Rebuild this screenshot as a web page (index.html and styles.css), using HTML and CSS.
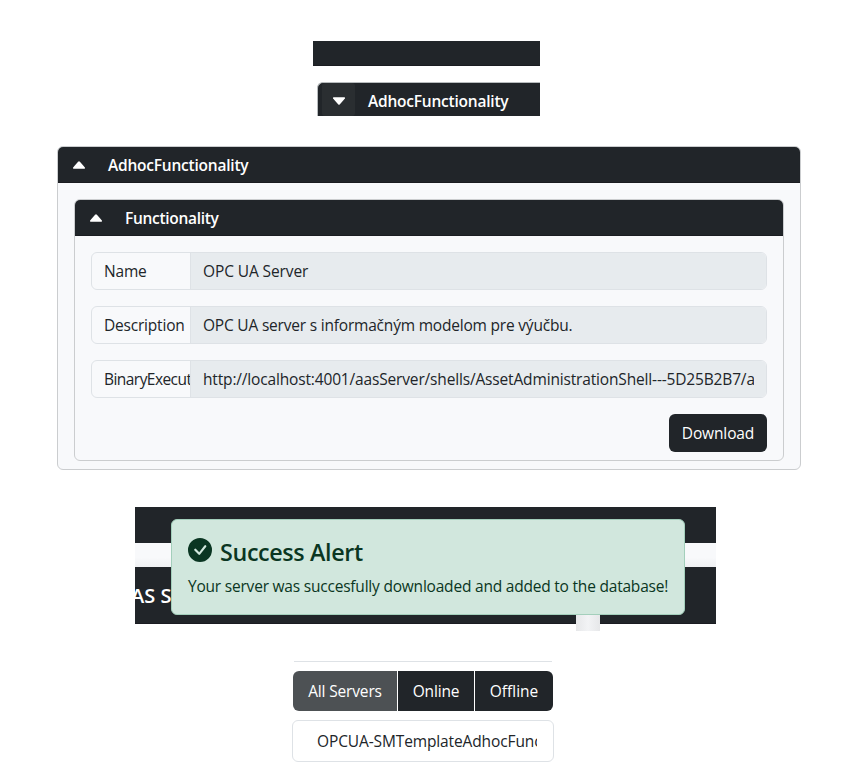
FILE: index.html
```html
<!DOCTYPE html>
<html lang="en">
<head>
<meta charset="utf-8">
<title>AAS Servers</title>
<link rel="stylesheet" href="styles.css">
</head>
<body>
<main class="page">
  <div class="bar"></div>

  <section class="collapsed">
    <button class="toggle" aria-label="Expand"><svg width="14" height="8" viewBox="0 0 14 8"><path d="M1.700.3h10.600c.7 0 1 .7.6 1.200L7.900 7.200a1.200 1.200 0 0 1-1.800 0L1.100 1.500C.700 1 1 .3 1.700.3z"/></svg></button>
    <span class="heading"><span class="t-adhoc">AdhocFunctionality</span></span>
  </section>

  <section class="card outer">
    <header class="card-head">
      <svg width="14" height="8" viewBox="0 0 14 8"><path d="M1.700 7.700h10.600c.7 0 1-.7.6-1.200L7.900.8a1.200 1.200 0 0 0-1.800 0L1.100 6.500c-.4.5-.1 1.200.6 1.200z"/></svg>
      <span class="t-adhoc">AdhocFunctionality</span>
    </header>
    <div class="card inner">
      <header class="card-head">
        <svg width="14" height="8" viewBox="0 0 14 8"><path d="M1.700 7.700h10.600c.7 0 1-.7.6-1.200L7.900.8a1.200 1.200 0 0 0-1.800 0L1.100 6.500c-.4.5-.1 1.200.6 1.200z"/></svg>
        <span class="t-func">Functionality</span>
      </header>
      <div class="fields">
        <div class="field"><div class="label"><span class="t-name">Name</span></div><div class="value"><div class="clip"><span class="t-server">OPC UA Server</span></div></div></div>
        <div class="field"><div class="label"><span class="t-desc">Description</span></div><div class="value"><div class="clip"><span class="t-text">OPC UA server s informačným modelom pre výučbu.</span></div></div></div>
        <div class="field"><div class="label"><span class="t-bin">BinaryExecut</span></div><div class="value"><div class="clip"><span class="t-url">http://localhost:4001/aasServer/shells/AssetAdministrationShell---5D25B2B7/a</span></div></div></div>
        <button class="download"><span class="t-down">Download</span></button>
      </div>
    </div>
  </section>

  <section class="notice">
    <div class="strip top"></div>
    <div class="strip light"></div>
    <div class="strip title"><span class="t-as">AS S</span></div>
    <div class="stub"></div>
    <div class="alert">
      <div class="alert-head">
        <svg width="24" height="24" viewBox="0 0 16 16"><path d="M16 8A8 8 0 1 1 0 8a8 8 0 0 1 16 0zm-3.970-3.030a.75.75 0 0 0-1.080.022L7.477 9.417 5.384 7.323a.75.75 0 0 0-1.060 1.060L6.970 11.030a.75.75 0 0 0 1.079-.02l3.992-4.990a.75.75 0 0 0-.010-1.050z"/></svg>
        <span class="t-success">Success Alert</span>
      </div>
      <div class="alert-body"><span class="t-body">Your server was succesfully downloaded and added to the database!</span></div>
    </div>
  </section>

  <section class="filter">
    <div class="rule"></div>
    <div class="group">
      <button class="tab all"><span class="t-all">All Servers</span></button>
      <button class="tab online"><span class="t-on">Online</span></button>
      <button class="tab offline"><span class="t-off">Offline</span></button>
    </div>
    <div class="item"><div class="clip"><span class="t-item">OPCUA-SMTemplateAdhocFunc</span></div></div>
  </section>
</main>
</body>
</html>
```
FILE: styles.css
```css
* { box-sizing: border-box; }
body { margin: 0; background: #fff; color: #212529; font: 15.5px/24px "Open Sans", "Noto Sans", sans-serif; }
button { font: inherit; border: 0; padding: 0; color: #fff; }
svg { display: block; fill: currentColor; flex: none; }
.page { display: flex; flex-direction: column; height: 773px; padding-top: 41px; overflow: hidden; }
.bar { width: 227px; height: 25px; margin-left: 313px; background: #212529; border-bottom: 1px solid #1a1c21; }
.collapsed { display: flex; width: 223px; height: 34px; margin: 16px 0 0 317px; background: #212529; border: solid #b8bcbe; border-width: 1px 0 0 1px; border-radius: 6px 0 0 0; color: #fff; overflow: hidden; }
.toggle { width: 33px; margin-left: 4px; padding-top: 2px; background: #2a2e31; display: flex; justify-content: center; align-items: center; border-radius: 3px; }
.heading { margin-left: 13px; padding-top: 6px; font-weight: 600; }
.card { border: 1px solid #cbcdcf; border-radius: 6px; background: #f8f9fb; overflow: hidden; }
.card-head { display: flex; align-items: center; height: 36px; padding: 1px 0 0 14px; gap: 22px; background: #212529; border-bottom: 1px solid #1a1c21; color: #fff; font-weight: 600; }
.outer { width: 744px; height: 324px; margin: 30px 0 0 57px; }
.inner { width: 710px; height: 262px; margin: 16px 0 0 16px; }
.fields { display: flex; flex-direction: column; gap: 16px; padding: 16px; }
.field { display: flex; height: 38px; border: 1px solid #dee2e6; border-radius: 6px; overflow: hidden; }
.label { width: 98px; padding: 6px 0 0 12px; overflow: hidden; white-space: nowrap; flex: none; }
.value { flex: 1; min-width: 0; padding: 6px 12px; background: #e7ebee; border-left: 1px solid #dee2e6; }
.clip { overflow: hidden; white-space: nowrap; }
.download { align-self: flex-end; width: 98px; height: 38px; border-radius: 6px; background: #212529; }
.notice { position: relative; width: 581px; height: 124px; margin: 37px 0 0 135px; }
.strip { background: #212529; }
.top { height: 36px; }
.light { height: 24px; background: linear-gradient(#f8f9fb 60%, #f0f1f3); }
.title { height: 57px; padding-top: 17px; overflow: hidden; color: #fff; font-size: 20px; font-weight: 600; border-bottom: 1px solid #1a1c21; white-space: nowrap; }
.stub { position: relative; width: 24px; height: 16px; margin: -9px 0 0 441px; background: linear-gradient(90deg, #e6e7e9, #f2f3f5 50%, #e6e7e9); }
.alert { position: absolute; left: 36px; top: 12px; width: 514px; height: 96px; padding: 16px; border: 1px solid #a3cfbb; border-radius: 6px; background: #d1e7dd; color: #0a3622; }
.alert-head { display: flex; align-items: flex-start; gap: 8px; height: 29px; padding-top: 2px; font-size: 23.3px; line-height: 28px; font-weight: 600; }
.alert-body { margin-top: 9px; white-space: nowrap; }
.filter { width: 262px; margin: 30px 0 0 292px; }
.rule { height: 1px; margin: 0 2px; background: #dee2e6; }
.group { display: flex; gap: 1px; height: 40px; margin: 9px 1px 0; border-radius: 6px; overflow: hidden; }
.tab { background: #212529; }
.all { width: 104px; background: #4d5154; }
.online { width: 76px; }
.offline { flex: 1; }
.item { height: 42px; margin-top: 9px; padding: 8px 16px 0 24px; border: 1px solid #dee2e6; border-radius: 6px; }
.t-adhoc { letter-spacing: -.22px; }
.t-func { letter-spacing: -.3px; }
.t-name { letter-spacing: -.2px; }
.t-server { letter-spacing: -.1px; }
.t-desc { letter-spacing: -.2px; }
.t-bin { letter-spacing: -.55px; }
.t-text { letter-spacing: -.2px; }
.t-url { letter-spacing: -.16px; }
.t-down { letter-spacing: -.12px; }
.t-as { margin-left: -4px; }
.t-success { letter-spacing: -.36px; }
.t-body { letter-spacing: -.21px; }
.t-all { letter-spacing: -.15px; }
.t-on { letter-spacing: -.18px; }
.t-item { letter-spacing: -.12px; }
```
